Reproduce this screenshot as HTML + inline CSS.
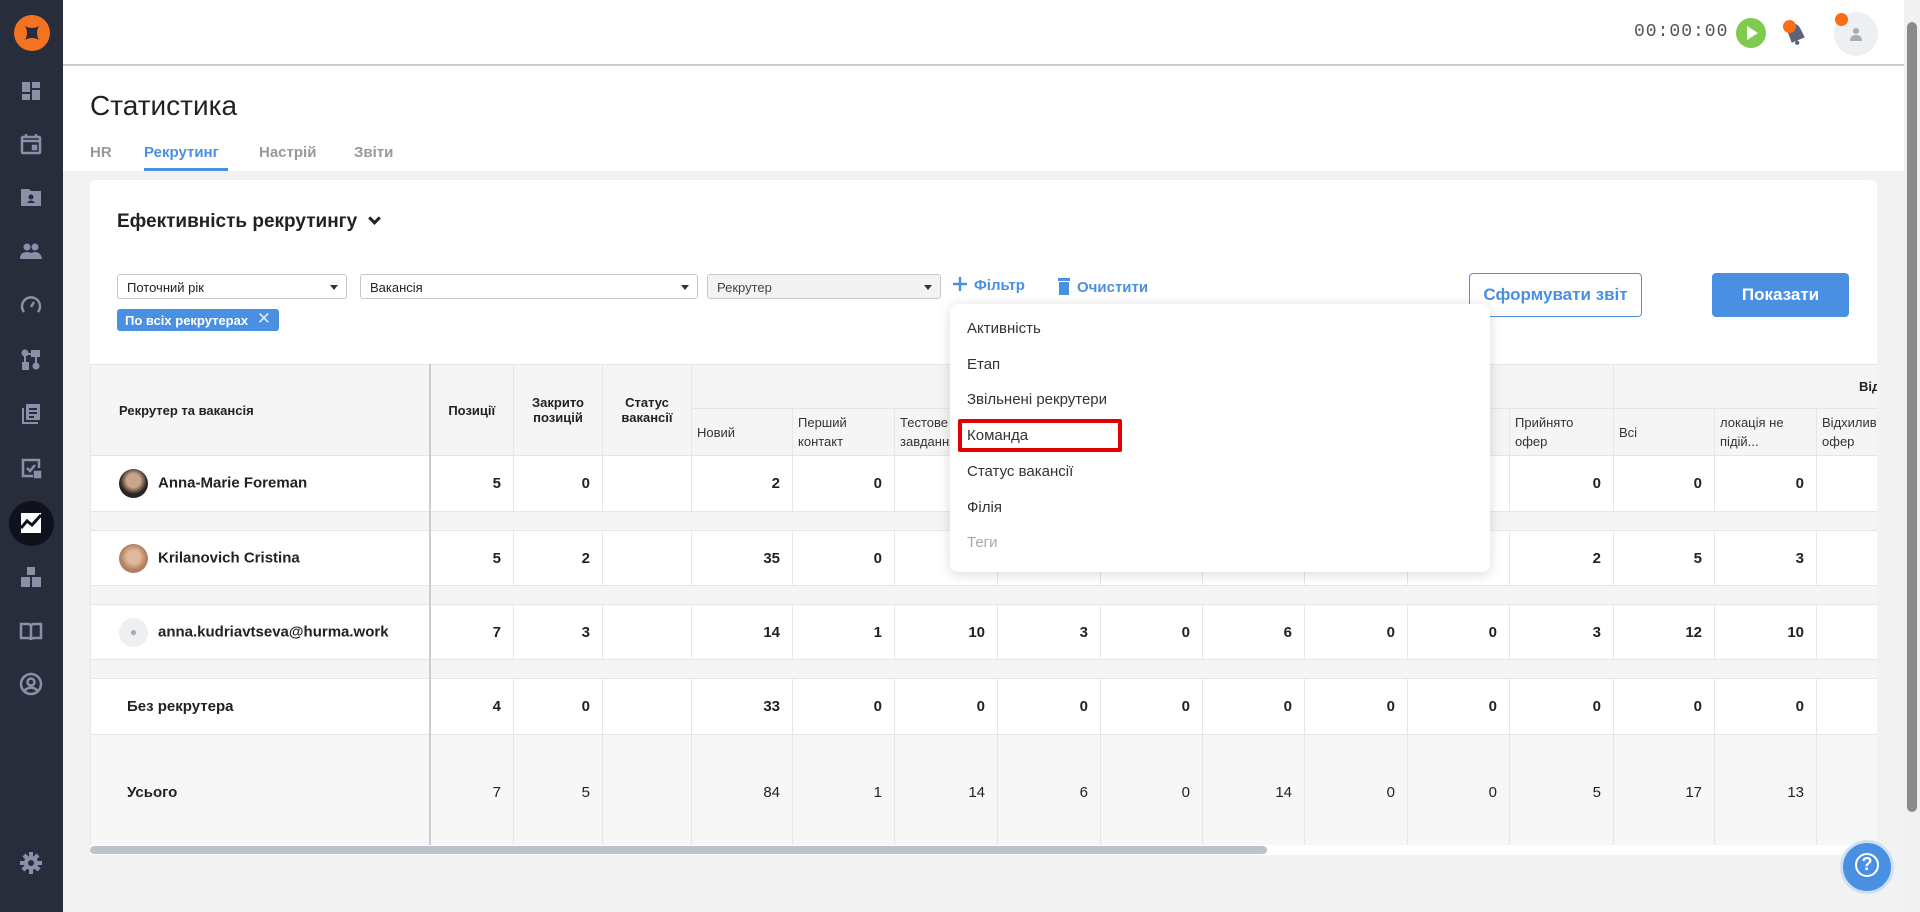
<!DOCTYPE html>
<html><head><meta charset="utf-8"><style>
*{box-sizing:border-box;margin:0;padding:0}
body{width:1920px;height:912px;overflow:hidden;background:#f2f2f2;font-family:"Liberation Sans","DejaVu Sans",sans-serif;color:#222;position:relative}
.abs{position:absolute}
#side{left:0;top:0;width:63px;height:912px;background:#282d3c}
.ic{position:absolute;left:19px;width:24px;height:24px}
#top{left:63px;top:0;width:1841px;height:66px;background:#fff;border-bottom:2px solid #ccc}
#head{left:63px;top:66px;width:1841px;height:105px;background:#fff}
.sel{position:absolute;top:274px;height:25px;border:1px solid #c8c8c8;border-radius:3px;font-size:13px;padding:5px 9px;background:#fff}
.sel:after{content:"";position:absolute;right:8px;top:10px;border:4px solid transparent;border-top:5px solid #333}
table{border-collapse:collapse;position:absolute;left:0;top:0;table-layout:fixed;width:1828px}
td,th{border:1px solid #e6e6e6;font-size:13px}
th{background:#f5f5f5;font-weight:bold;text-align:center}
.sub th{font-weight:normal;text-align:left;vertical-align:middle;padding:4px 5px;line-height:19px;color:#333}
td.n{text-align:right;padding-right:12px;font-weight:bold;font-size:15px}
tr.gap td{background:#f5f5f5;height:19px}
tr.tot td{background:#f7f7f7;height:116px;font-size:15px}
tr.tot td.n{font-weight:normal}
.name{font-weight:bold;font-size:15px;padding-left:28px}
.av{display:inline-block;width:29px;height:29px;border-radius:50%;vertical-align:middle;margin-right:10px}
#dd{left:950px;top:304px;width:540px;height:268px;background:#fff;border-radius:8px;box-shadow:0 2px 12px rgba(0,0,0,.15)}
#dd div{position:absolute;left:17px;font-size:15px;color:#333}
</style></head><body>
<div id="side" class="abs">
 <div class="abs" style="left:14px;top:15px;width:36px;height:36px;border-radius:50%;background:#f47321"><svg width="36" height="36" viewBox="0 0 36 36"><path d="M11 11 Q18 15 25 11 Q21 18 25 25 Q18 21 11 25 Q15 18 11 11Z" fill="#282d3c"/></svg></div>
 <svg class="ic" style="top:79px" viewBox="0 0 24 24" fill="#8a90a8"><path d="M3 3h8v10H3zM13 3h8v6h-8zM13 11h8v10h-8zM3 15h8v6H3z"/></svg>
 <svg class="ic" style="top:132px" viewBox="0 0 24 24" fill="none" stroke="#8a90a8" stroke-width="2.5"><rect x="3" y="5" width="18" height="16" rx="1"/><path d="M7 2v4M17 2v4M3 9h18"/><rect x="14" y="14" width="3" height="3" fill="#8a90a8"/></svg>
 <svg class="ic" style="top:185px" viewBox="0 0 24 24" fill="#8a90a8"><path d="M2 4h8l2 2h10v15H2z"/><circle cx="12" cy="12" r="2.5" fill="#282d3c"/><path d="M8 18q4-5 8 0z" fill="#282d3c"/></svg>
 <svg class="ic" style="top:239px" viewBox="0 0 24 24" fill="#8a90a8"><circle cx="8" cy="8" r="3.5"/><circle cx="16" cy="8" r="3.5"/><path d="M1 20q0-7 7-7t7 7zM10 20q0-7 6-7t7 7z"/></svg>
 <svg class="ic" style="top:293px" viewBox="0 0 24 24" fill="none" stroke="#8a90a8" stroke-width="2.5"><path d="M5 19A9 9 0 1 1 19 19"/><path d="M12 14l3-5"/></svg>
 <svg class="ic" style="top:348px" viewBox="0 0 24 24" fill="#8a90a8"><circle cx="6" cy="5" r="3.5"/><rect x="12" y="2" width="9" height="7"/><rect x="3" y="14" width="7" height="8"/><circle cx="17" cy="18" r="3.5"/><rect x="5" y="6" width="2" height="9"/><rect x="16" y="8" width="2" height="8"/><rect x="6" y="5" width="8" height="2"/></svg>
 <svg class="ic" style="top:402px" viewBox="0 0 24 24" fill="#8a90a8"><path d="M3 6h2v14h14v2H3z"/><rect x="7" y="2" width="14" height="16" rx="1"/><path d="M10 6h8v2h-8zM10 10h8v2h-8zM10 14h5v2h-5z" fill="#282d3c"/></svg>
 <svg class="ic" style="top:456px" viewBox="0 0 24 24" fill="none" stroke="#8a90a8" stroke-width="2.5"><path d="M20 12V4H4v16h10"/><path d="M8 12l3 3 5-6"/><path d="M16 16h5v5h-5z" fill="#8a90a8"/></svg>
 <div class="abs" style="left:9px;top:501px;width:45px;height:45px;border-radius:50%;background:#0f121c"></div>
 <svg class="ic" style="top:511px" viewBox="0 0 24 24"><rect x="2" y="2" width="20" height="20" fill="#fff"/><path d="M2 17l6-7 5 4 9-10" stroke="#0f121c" stroke-width="3" fill="none"/></svg>
 <svg class="ic" style="top:565px" viewBox="0 0 24 24" fill="#8a90a8"><rect x="8" y="2" width="8" height="8"/><rect x="2" y="12" width="9" height="10"/><rect x="13" y="12" width="9" height="10"/></svg>
 <svg class="ic" style="top:619px" viewBox="0 0 24 24" fill="none" stroke="#8a90a8" stroke-width="2.5"><path d="M2 5h7q3 0 3 3v13q0-2-3-2H2zM22 5h-7q-3 0-3 3v13q0-2 3-2h7z"/></svg>
 <svg class="ic" style="top:672px" viewBox="0 0 24 24" fill="none" stroke="#8a90a8" stroke-width="2.5"><circle cx="12" cy="12" r="10"/><circle cx="12" cy="10" r="3.5"/><path d="M5 19q7-7 14 0"/></svg>
 <svg class="ic" style="top:851px" viewBox="0 0 24 24" fill="#8a90a8"><circle cx="12" cy="12" r="7"/><path d="M10 1h4v22h-4zM1 10h22v4H1zM3.5 5.5l3-3 15 15-3 3zM17.5 2.5l3 3-15 15-3-3z"/><circle cx="12" cy="12" r="3" fill="#282d3c"/></svg>
</div>
<div id="top" class="abs"></div>
<div class="abs" style="left:1634px;top:22px;font-family:'Liberation Mono',monospace;font-size:18px;color:#555;letter-spacing:1px">00:00:00</div>
<div class="abs" style="left:1736px;top:18px;width:30px;height:30px;border-radius:50%;background:#7fcb50"><div class="abs" style="left:11px;top:8px;border-left:11px solid #fff;border-top:7px solid transparent;border-bottom:7px solid transparent"></div></div>
<svg class="abs" style="left:1782px;top:20px" width="26" height="26" viewBox="0 0 24 24"><path d="M8 4q6-2 9 4l4 8-12 5-3-8q-2-6 2-9z" fill="#5b6478"/><circle cx="14" cy="21" r="2" fill="#5b6478"/></svg>
<div class="abs" style="left:1783px;top:20px;width:13px;height:13px;border-radius:50%;background:#f96d15"></div>
<div class="abs" style="left:1834px;top:12px;width:44px;height:44px;border-radius:50%;background:#eeeff3"><svg class="abs" style="left:14px;top:14px" width="16" height="16" viewBox="0 0 16 16" fill="#a9acb6"><circle cx="8" cy="5" r="3"/><path d="M2 15q0-6 6-6t6 6z"/></svg></div>
<div class="abs" style="left:1835px;top:13px;width:13px;height:13px;border-radius:50%;background:#f96d15"></div>
<div class="abs" style="left:1904px;top:0;width:16px;height:912px;background:#f1f1f1"><div class="abs" style="left:3px;top:22px;width:10px;height:790px;border-radius:5px;background:#8b8b8b"></div></div>
<div id="head" class="abs"></div>
<div class="abs" style="left:90px;top:90px;font-size:28px;color:#222">Статистика</div>
<div class="abs" style="left:90px;top:144px;font-size:15px;font-weight:bold;color:#999">HR</div>
<div class="abs" style="left:144px;top:144px;font-size:15px;font-weight:bold;color:#4a90e2">Рекрутинг</div>
<div class="abs" style="left:144px;top:168px;width:84px;height:3px;background:#4a90e2"></div>
<div class="abs" style="left:259px;top:144px;font-size:15px;font-weight:bold;color:#999">Настрій</div>
<div class="abs" style="left:354px;top:144px;font-size:15px;font-weight:bold;color:#999">Звіти</div>
<div class="abs" style="left:90px;top:180px;width:1787px;height:672px;background:#fff;border-radius:6px"></div>
<div class="abs" style="left:117px;top:211px;font-size:19px;font-weight:bold;color:#222">Ефективність рекрутингу <span style="display:inline-block;width:9px;height:9px;border-right:3px solid #222;border-bottom:3px solid #222;transform:rotate(45deg);margin:0 0 4px 8px"></span></div>
<div class="sel" style="left:117px;width:230px">Поточний рік</div>
<div class="sel" style="left:360px;width:338px">Вакансія</div>
<div class="sel" style="left:707px;width:234px;background:#f3f3f3;color:#444">Рекрутер</div>
<div class="abs" style="left:953px;top:277px;font-size:15px;font-weight:bold;color:#4a90e2;line-height:18px"><svg width="14" height="14" viewBox="0 0 14 14" style="vertical-align:-1px;margin-right:7px"><path d="M7 0v14M0 7h14" stroke="#4a90e2" stroke-width="2.4"/></svg>Фільтр</div>
<div class="abs" style="left:1057px;top:277px;font-size:15px;font-weight:bold;color:#4a90e2;line-height:18px"><svg width="14" height="18" viewBox="0 0 14 18" style="vertical-align:-3px;margin-right:6px"><rect x="1" y="1" width="12" height="3" fill="#4a90e2"/><rect x="2" y="5" width="10" height="13" fill="#4a90e2"/></svg>Очистити</div>
<div class="abs" style="left:117px;top:309px;width:162px;height:22px;background:#4a90e2;border-radius:3px;color:#fff;font-size:13px;font-weight:bold;padding:4px 8px">По всіх рекрутерах <span style="font-weight:normal;font-size:17px;position:absolute;right:8px;top:0;color:#dce9f9">✕</span></div>
<div class="abs" style="left:1469px;top:273px;width:173px;height:44px;border:1px solid #4a90e2;border-radius:4px;color:#4a90e2;font-size:17px;font-weight:bold;text-align:center;line-height:42px">Сформувати звіт</div>
<div class="abs" style="left:1712px;top:273px;width:137px;height:44px;background:#4a90e2;border-radius:4px;color:#fff;font-size:17px;font-weight:bold;text-align:center;line-height:44px">Показати</div>
<div class="abs" style="left:90px;top:364px;width:1787px;height:490px;overflow:hidden">
<table>
<colgroup><col style="width:339px"><col style="width:84px"><col style="width:89px"><col style="width:89px"><col style="width:101px"><col style="width:102px"><col style="width:103px"><col style="width:103px"><col style="width:102px"><col style="width:102px"><col style="width:103px"><col style="width:102px"><col style="width:104px"><col style="width:101px"><col style="width:102px"><col style="width:102px"></colgroup>
<tr style="height:44px"><th rowspan="2" style="text-align:left;padding-left:28px;border-right:2px solid #c9ccd6">Рекрутер та вакансія</th><th rowspan="2">Позиції</th><th rowspan="2">Закрито<br>позицій</th><th rowspan="2">Статус<br>вакансії</th><th colspan="9"></th><th colspan="3" style="text-align:left;padding-left:245px;white-space:nowrap">Відмова</th></tr>
<tr class="sub" style="height:45px"><th>Новий</th><th>Перший<br>контакт</th><th>Тестове<br>завдання</th><th></th><th></th><th></th><th></th><th></th><th>Прийнято<br>офер</th><th>Всі</th><th>локація не<br>підій...</th><th>Відхилив<br>офер</th></tr>
<tr style="height:56px;background:#fff"><td class="name" style="border-right:2px solid #c9ccd6"><span class="av" style="background:radial-gradient(circle at 50% 40%,#c9a58c 30%,#2a2320 60%)"></span>Anna-Marie Foreman</td><td class="n">5</td><td class="n">0</td><td></td><td class="n">2</td><td class="n">0</td><td></td><td></td><td></td><td></td><td></td><td></td><td class="n">0</td><td class="n">0</td><td class="n">0</td><td></td></tr>
<tr class="gap"><td style="border-right:2px solid #c9ccd6"></td><td colspan="15"></td></tr>
<tr style="height:55px"><td class="name" style="border-right:2px solid #c9ccd6"><span class="av" style="background:radial-gradient(circle at 50% 45%,#e2b89a 30%,#b08060 60%)"></span>Krilanovich Cristina</td><td class="n">5</td><td class="n">2</td><td></td><td class="n">35</td><td class="n">0</td><td></td><td></td><td></td><td></td><td></td><td></td><td class="n">2</td><td class="n">5</td><td class="n">3</td><td></td></tr>
<tr class="gap"><td style="border-right:2px solid #c9ccd6"></td><td colspan="15"></td></tr>
<tr style="height:55px"><td class="name" style="border-right:2px solid #c9ccd6"><span class="av" style="background:#eeeff3;text-align:center;line-height:29px;color:#a9acb6;font-size:12px">●</span>anna.kudriavtseva@hurma.work</td><td class="n">7</td><td class="n">3</td><td></td><td class="n">14</td><td class="n">1</td><td class="n">10</td><td class="n">3</td><td class="n">0</td><td class="n">6</td><td class="n">0</td><td class="n">0</td><td class="n">3</td><td class="n">12</td><td class="n">10</td><td></td></tr>
<tr class="gap"><td style="border-right:2px solid #c9ccd6"></td><td colspan="15"></td></tr>
<tr style="height:56px"><td class="name" style="padding-left:36px;border-right:2px solid #c9ccd6">Без рекрутера</td><td class="n">4</td><td class="n">0</td><td></td><td class="n">33</td><td class="n">0</td><td class="n">0</td><td class="n">0</td><td class="n">0</td><td class="n">0</td><td class="n">0</td><td class="n">0</td><td class="n">0</td><td class="n">0</td><td class="n">0</td><td></td></tr>
<tr class="tot"><td class="name" style="padding-left:36px;border-right:2px solid #c9ccd6">Усього</td><td class="n">7</td><td class="n">5</td><td></td><td class="n">84</td><td class="n">1</td><td class="n">14</td><td class="n">6</td><td class="n">0</td><td class="n">14</td><td class="n">0</td><td class="n">0</td><td class="n">5</td><td class="n">17</td><td class="n">13</td><td></td></tr>
</table>
</div>
<div class="abs" style="left:90px;top:845px;width:1787px;height:10px;background:#fff"></div>
<div class="abs" style="left:90px;top:846px;width:1177px;height:8px;border-radius:4px;background:#bcc3cf"></div>
<div id="dd" class="abs">
 <div style="top:16px">Активність</div>
 <div style="top:52px">Етап</div>
 <div style="top:87px">Звільнені рекрутери</div>
 <div style="top:123px">Команда</div>
 <div style="top:159px">Статус вакансії</div>
 <div style="top:195px">Філія</div>
 <div style="top:230px;color:#aaa">Теги</div>
</div>
<div class="abs" style="left:958px;top:419px;width:164px;height:33px;border:4px solid #e30000;border-radius:2px"></div>
<div class="abs" style="left:1840px;top:840px;width:54px;height:54px;border-radius:50%;background:#4a90e2;border:3px solid #cfe0f5"><div class="abs" style="left:12px;top:10px;width:24px;height:24px;border:2.5px solid #fff;border-radius:50%;color:#fff;font-size:18px;font-weight:bold;text-align:center;line-height:19px">?</div></div>
</body></html>
